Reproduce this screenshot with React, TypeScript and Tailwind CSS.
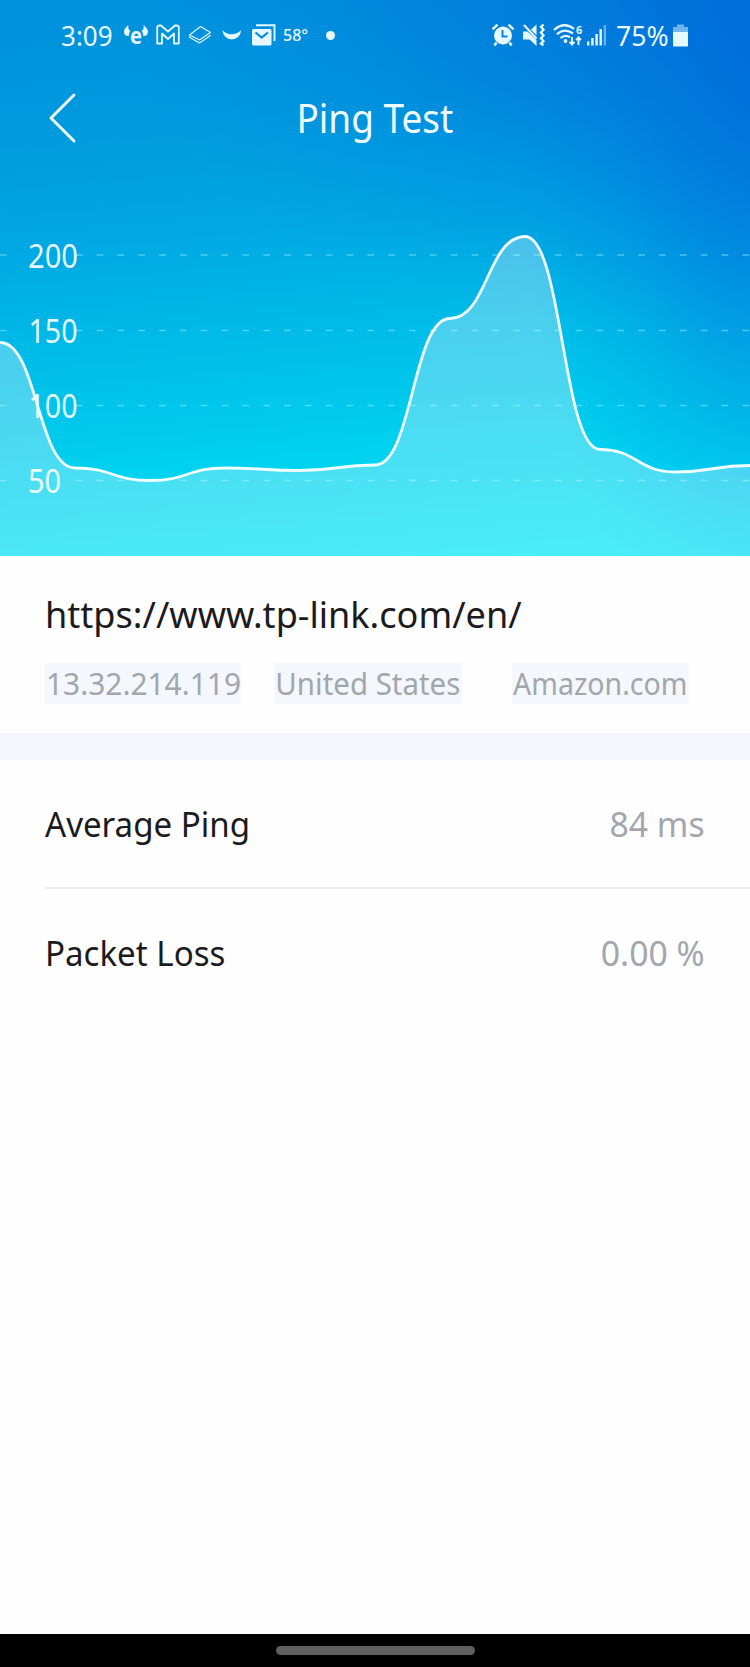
import type { ReactNode } from "react"

// Ping samples, already scaled to the chart's pixel height
const points = [182.5, 308, 320.5, 308, 310.5, 305, 158.5, 76.5, 289.5, 312, 305.5]
const step = 75

const gridLines = [
    { label: "200", y: 95, width: 50 },
    { label: "150", y: 170.5, width: 49 },
    { label: "100", y: 245.5, width: 49 },
    { label: "50", y: 320.5, width: 33 },
]

// Smooth line with a horizontal tangent on every sample
function buildLine() {
    return points.reduce((path, y, i) => {
        if (i === 0) return `M0 ${y}`
        const x = i * step
        const mid = x - step / 2
        return `${path} C${mid} ${points[i - 1]} ${mid} ${y} ${x} ${y}`
    }, "")
}

function PingChart() {
    const line = buildLine()

    return (
        <svg className="block w-full h-[396px]" viewBox="0 0 750 396">
            {gridLines.map(({ label, y, width }) => (
                <g key={label}>
                    <path d={`M0 ${y}H6.5`} stroke="#8ff4ff" strokeOpacity="0.5" strokeWidth="1.3" />
                    <path
                        d={`M75.8 ${y}H750`}
                        stroke="#8ff4ff"
                        strokeOpacity="0.5"
                        strokeWidth="1.3"
                        strokeDasharray="6.8 14.03"
                    />
                    <text
                        x={label.startsWith("1") ? 28.5 : 28}
                        y={y + 12.5}
                        fontSize="32"
                        fill="white"
                        fillOpacity="0.92"
                        textLength={width}
                        lengthAdjust="spacingAndGlyphs"
                    >
                        {label}
                    </text>
                </g>
            ))}
            <path d={`${line} V396 H0 Z`} fill="white" fillOpacity="0.29" />
            <path d={line} fill="none" stroke="#effdff" strokeWidth="2.8" />
        </svg>
    )
}

function StatusBar() {
    return (
        <div className="flex h-[70px] items-center pl-[61px] pr-[62px] text-[#e6f8ff]">
            <span className="w-[63px] text-[28px] whitespace-nowrap"><span className="inline-block origin-left scale-x-[0.93]">3:09</span></span>

            {/* Notificações */}
            <svg className="w-6 h-6 shrink-0 overflow-visible" viewBox="0 0 24 24" fill="currentColor">
                <path d="M4.500 2C.5 5-1.500 9 1.200 12 2.500 13.300 4 13.300 5 12.500 4.800 10.500 5.500 9 6.500 8 4.500 7 3.800 5 4.500 2ZM19.500 2c4 3 6 7 3.300 10-1.300 1.300-2.800 1.300-3.800.5.2-2-.5-3.500-1.500-4.500 2-1 2.700-3 2-6Z" />
                <text x="6" y="21" fontSize="23" fontWeight="700" textLength="12" lengthAdjust="spacingAndGlyphs">e</text>
            </svg>
            <svg className="ml-2 w-6 h-6 shrink-0" viewBox="0 0 24 24" fill="none" stroke="currentColor" strokeWidth="1.8" strokeLinejoin="round">
                <path d="M1.200 4.500Q1.200 2.500 3.400 2.500H5L12 8.500 19 2.500H20.600Q22.800 2.500 22.800 4.500V20.500H18V10.500L12 16 6 10.500V20.500H1.200V4.500" />
            </svg>
            <svg className="ml-2 w-6 h-6 shrink-0" viewBox="0 0 24 24" fill="none" stroke="currentColor" strokeWidth="1.1" strokeLinejoin="round" strokeLinecap="round">
                <path d="M1.500 12 12.500 3.500 22.500 9.500 11.500 17ZM1.500 12V14.200L11.500 20 22.500 12.500" />
            </svg>
            <svg className="ml-[9px] w-[22px] h-6 shrink-0" viewBox="0 0 22 24" fill="currentColor">
                <path d="M1.500 7.200C6 12.500 15 12.500 20 7.200 19.500 19 2.500 19.500 1.500 7.200Z" />
            </svg>
            <svg className="ml-2 w-[25px] h-6 shrink-0" viewBox="0 0 25 24">
                <path d="M5 2.300H23.500V18" fill="none" stroke="currentColor" strokeWidth="1.900" />
                <rect x="1" y="6" width="19.500" height="16.500" rx="1.500" fill="currentColor" />
                <path d="m4.500 9.500 6.200 5 6.200-5" fill="none" stroke="#078bd9" strokeWidth="2.200" />
            </svg>
            <span className="ml-[7px] w-[43px] text-[16.500px] font-medium"><span className="inline-block origin-left scale-x-[0.97]">58°</span></span>
            <span className="size-[9px] rounded-full bg-[#e6f8ff]" />

            {/* Sistema */}
            <div className="ml-auto flex items-center">
                <svg className="w-6 h-6 shrink-0" viewBox="0 0 24 24">
                    <circle cx="12" cy="12.500" r="9" fill="currentColor" />
                    <path d="M1.500 6.300 6.500 1.600M22.500 6.300 17.500 1.600M5.500 19.500 3.500 22.500M18.500 19.500 20.500 22.500" stroke="currentColor" strokeWidth="2.500" />
                    <path d="M11.500 7V13.500H16.500" fill="none" stroke="#0784dd" strokeWidth="2" />
                </svg>
                <svg className="ml-[7px] w-6 h-6 shrink-0" viewBox="0 0 24 24" fill="currentColor">
                    <path d="M1 8.500H5.500L14.500 17V23L7.500 16.500H1ZM9 6.500 14.500 1.500V12.500Z" />
                    <path d="M2 2 14.500 15.500" stroke="currentColor" strokeWidth="2" />
                    <path d="m21.500 1.500-2.500 2.300 2.500 3-2.500 2.700 2.500 3-2.500 2.700 2.500 3-2.500 2.300 2.500 1.700" fill="none" stroke="currentColor" strokeWidth="2.300" />
                </svg>
                <svg className="ml-[7px] w-[30px] h-6 shrink-0" viewBox="0 0 30 24" fill="none" stroke="currentColor" strokeWidth="2.200">
                    <path d="M1 7Q11-2 21 6M4 11.300Q11.500 4.500 20 10.500M7.500 15Q12 11 17 14.200" />
                    <circle cx="12.500" cy="18" r="1.900" fill="currentColor" stroke="none" />
                    <path d="M19 14V21M16.500 18.800 19 21.500 21.500 18.800M25.500 22V15M23 17.200 25.500 14.500 28 17.200" strokeWidth="1.900" />
                    <text x="23" y="10.500" fontSize="11" fontWeight="700" fill="currentColor" stroke="none">6</text>
                </svg>
                <svg className="ml-[4px] w-5 h-6 shrink-0" viewBox="0 0 20 24" fill="currentColor">
                    <path d="M0 18.500h2.400V22.500H0zM4.200 15h2.400v7.500H4.200zM8.400 11h2.400v11.500H8.400zM12.500 6h2.400V22.500h-2.400z" />
                    <path d="M16.700 2h2.400v20.500h-2.400z" opacity=".45" />
                </svg>
                <span className="ml-[9px] w-[57px] text-[28px] whitespace-nowrap"><span className="inline-block origin-left scale-x-[0.95]">75%</span></span>
                <svg className="w-[15px] h-6 shrink-0" viewBox="0 0 15 24" fill="currentColor">
                    <path d="M4 1.500H11V4H15V9H0V4H4Z" opacity=".5" />
                    <path d="M0 9H15V22.500Q15 23.500 14 23.500H1Q0 23.500 0 22.500Z" />
                </svg>
            </div>
        </div>
    )
}

function Header() {
    return (
        <div className="grid h-[90px] grid-cols-[1fr_auto_1fr] items-center text-[#effcff]">
            <svg className="ml-[46px] mt-[6px] w-8 h-[54px]" viewBox="0 0 32 54" fill="none" stroke="currentColor" strokeWidth="3" strokeLinecap="round" strokeLinejoin="round">
                <path d="M28 4 5 27 28 50" />
            </svg>
            <h1 className="mt-[8px] text-[39.500px] leading-none scale-x-[0.935]">Ping Test</h1>
        </div>
    )
}

function Chip({ className, children }: { className: string; children: ReactNode }) {
    return (
        <span className={`flex h-[41px] items-center justify-center bg-[#f4f7fb] text-[30.500px] whitespace-nowrap text-[#a2a6ad] ${className}`}>
            {children}
        </span>
    )
}

function ResultRow({ label, value }: { label: string; value: string }) {
    return (
        <div className="flex h-[127px] items-center justify-between pr-[45px] pt-[1px] text-[35px]">
            <span className="origin-left scale-x-[0.945] text-[#1b1b1d]">{label}</span>
            <span className="origin-right scale-x-[0.965] text-[#a2a6ad]">{value}</span>
        </div>
    )
}

function App() {
    return (
        <div className="flex h-[1667px] w-[750px] flex-col overflow-hidden bg-[#fefefe] font-['Noto_Sans',sans-serif]">

            <div className="h-[556px] bg-[radial-gradient(ellipse_260px_620px_at_103%_12%,#0068dcb8_0%,#0070dc80_35%,#0078de38_65%,#0080e010_88%,#0080e000_100%),radial-gradient(ellipse_640px_340px_at_100%_0%,#005ed8b0_0%,#0066da78_35%,#0070dc38_65%,#0078dc10_88%,#0078dc00_100%),linear-gradient(175deg,#0090dc_0%,#009ade_22%,#00aae4_42%,#00c0e9_62%,#00d6f0_82%,#00e9f7_100%)]">
                <StatusBar />
                <Header />
                <PingChart />
            </div>

            <div className="h-[177px] pl-[45px] pt-[31px]">
                <p className="origin-left scale-x-[0.975] text-[37px] leading-[54px] whitespace-nowrap text-[#1b1b1d]">
                    https://www.tp-link.com/en/
                </p>
                <div className="mt-[22px] flex">
                    <Chip className="w-[196px]"><span className="scale-x-[0.98]">13.32.214.119</span></Chip>
                    <Chip className="ml-[33px] w-[188px]"><span className="scale-x-[0.965]">United States</span></Chip>
                    <Chip className="ml-[50px] w-[177px]"><span className="scale-x-[0.935]">Amazon.com</span></Chip>
                </div>
            </div>

            <div className="h-[27px] bg-[#f4f7fb]" />

            <div className="grow pl-[45px]">
                <ResultRow label="Average Ping" value="84 ms" />
                <div className="h-[2px] bg-[#ececee]" />
                <ResultRow label="Packet Loss" value="0.00 %" />
            </div>

            {/* Barra de gestos */}
            <div className="flex h-[33px] justify-center bg-black pt-[12px]">
                <div className="h-[9px] w-[199px] rounded-full bg-[#606060]" />
            </div>
        </div>
    )
}

export default App
